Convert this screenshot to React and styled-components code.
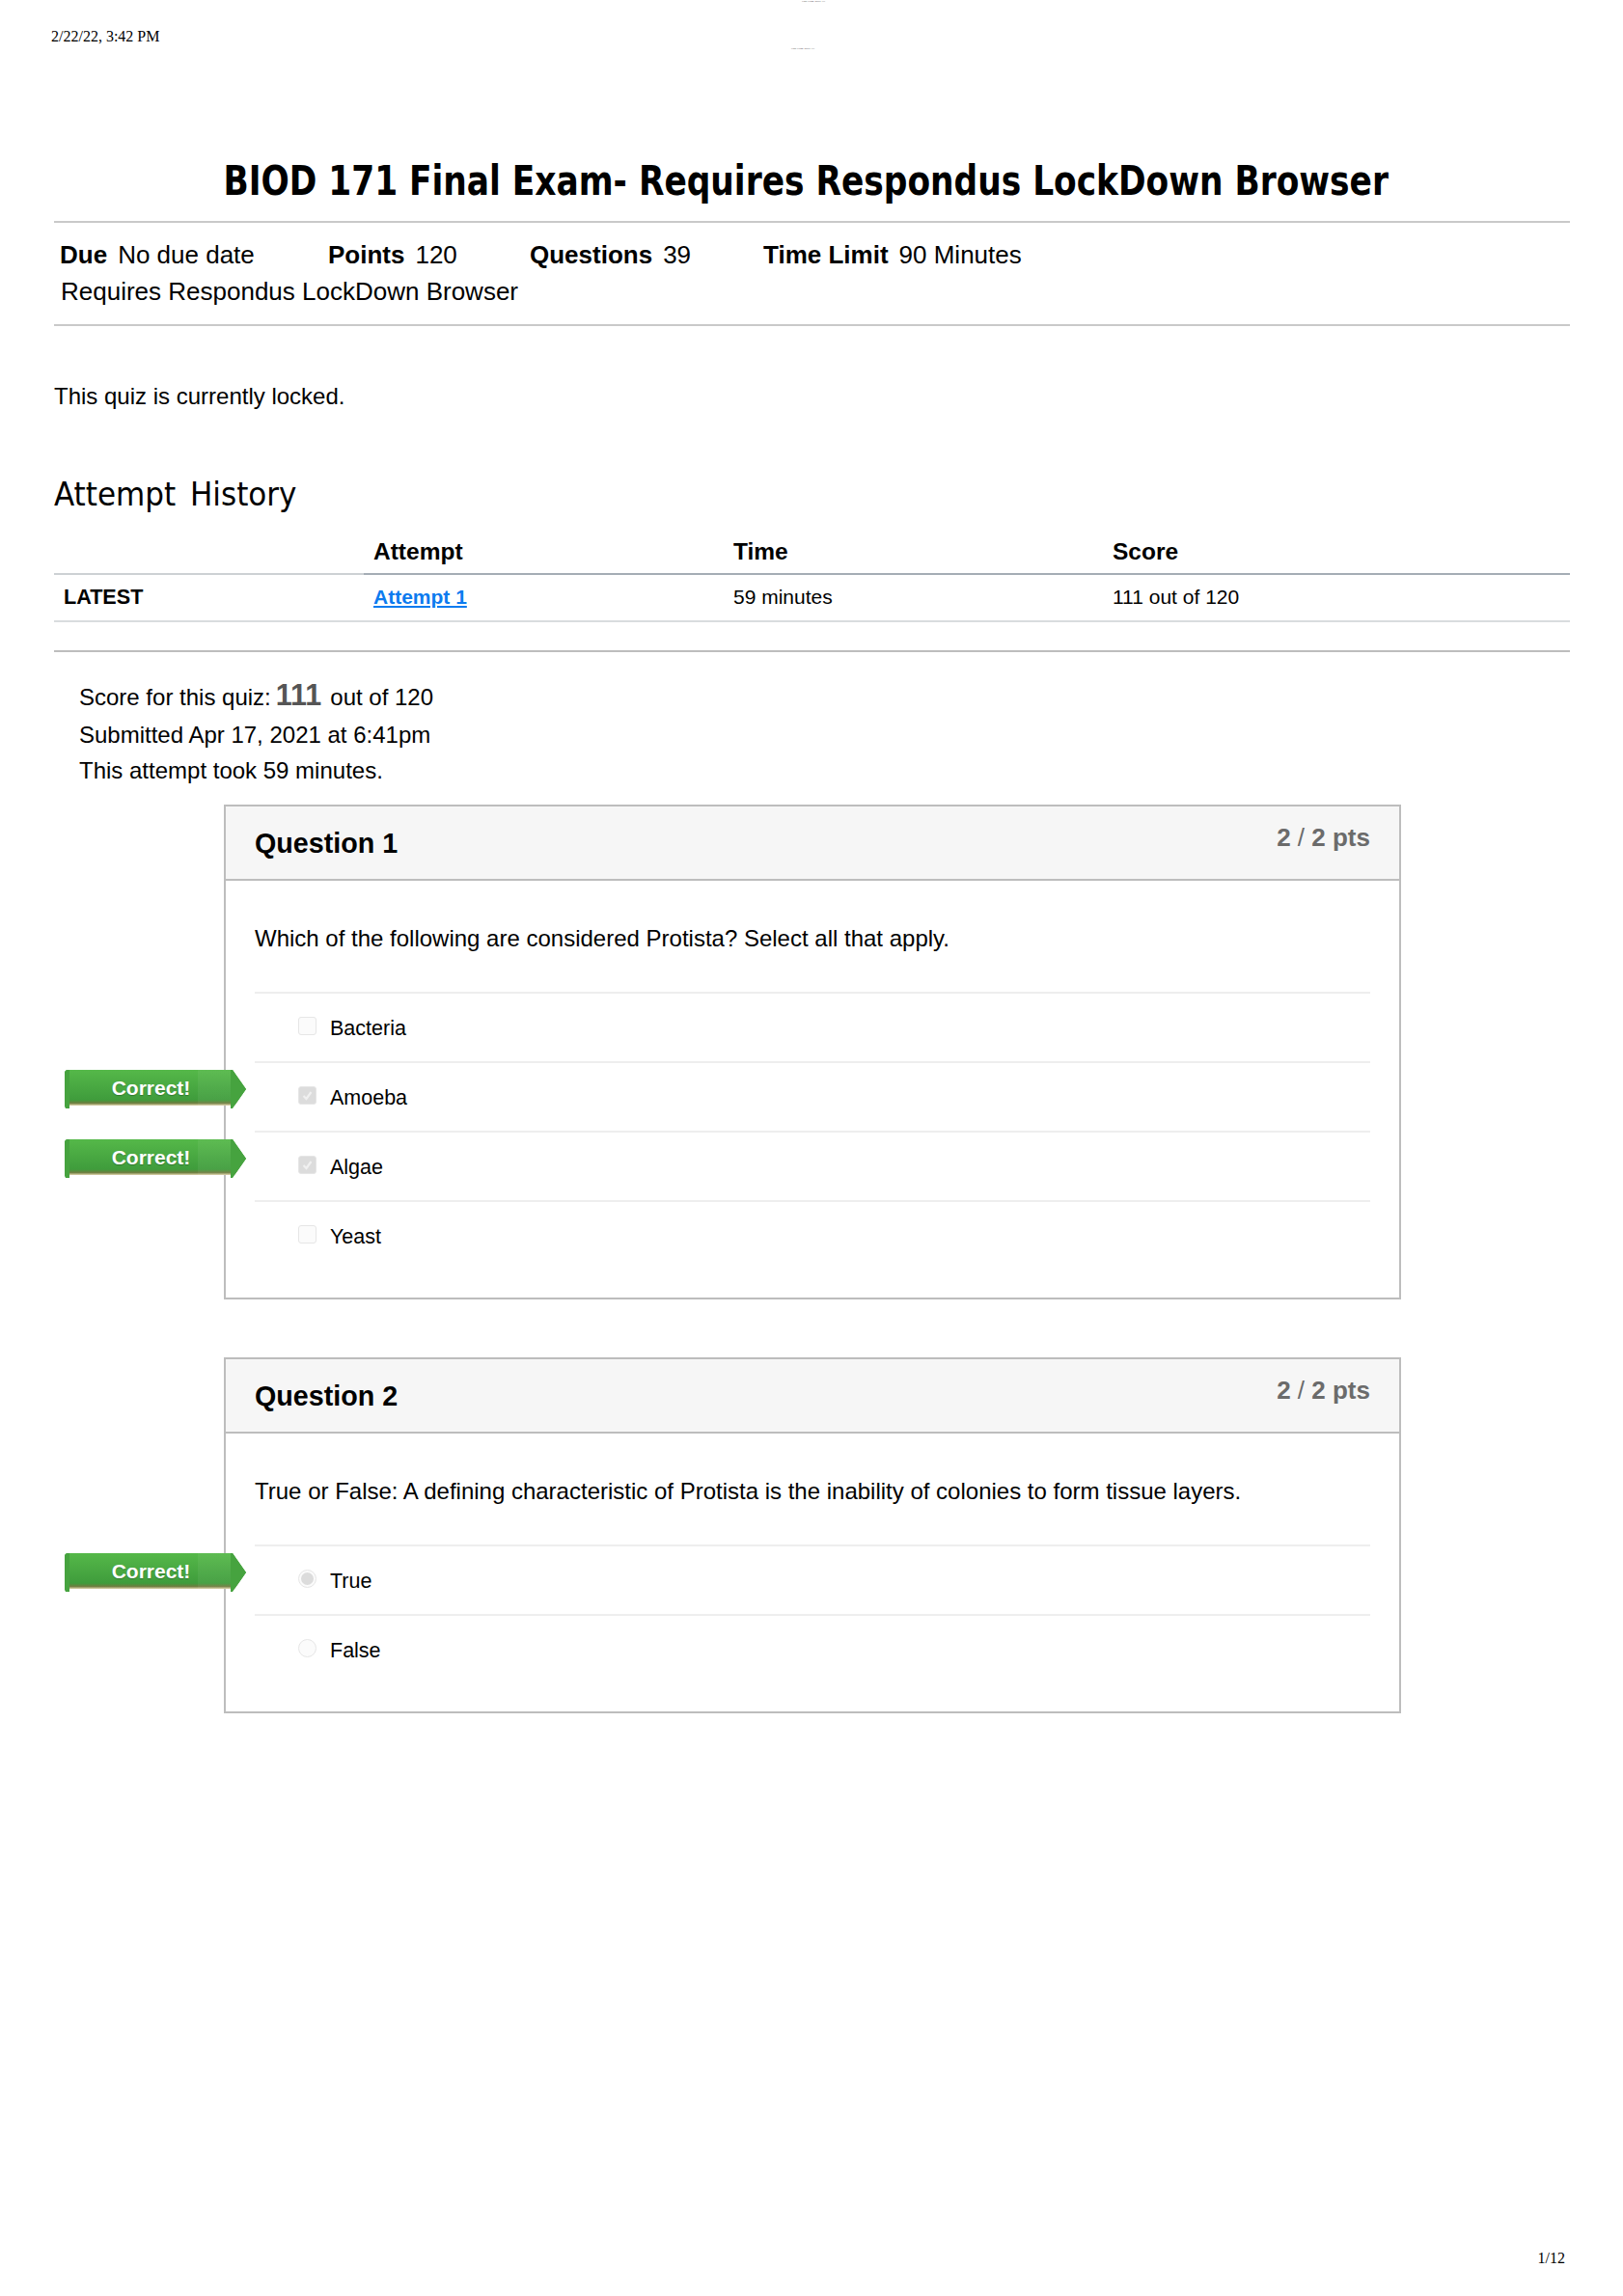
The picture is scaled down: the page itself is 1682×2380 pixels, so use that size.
import React from 'react';
import styled, { createGlobalStyle } from 'styled-components';

const GlobalStyle = createGlobalStyle`
  html, body { margin: 0; padding: 0; background: #fff; }
  body { font-family: 'Liberation Sans', Arial, sans-serif; color: #000; }
`;

const Page = styled.div`
  width: 1682px;
  height: 2380px;
  box-sizing: border-box;
  display: flex;
  flex-direction: column;
  padding: 0 55px 0 56px;
  overflow: hidden;
`;

const TinyLine = styled.div`
  height: 4px;
  line-height: 4px;
  font-size: 2.6px;
  color: #444;
  font-family: 'Liberation Serif', serif;
  margin-top: ${p => p.$top || 0}px;
  padding-left: ${p => p.$left}px;
`;

const DateLine = styled.div`
  margin: 24px 0 0 -3px;
  line-height: 20px;
  font-family: 'Liberation Serif', serif;
  font-size: 16px;
`;

const Title = styled.h1`
  margin: 110px 0 0;
  line-height: 50px;
  text-align: center;
  white-space: nowrap;
  font-family: 'DejaVu Sans', sans-serif;
  font-stretch: condensed;
  font-weight: 700;
  font-size: 42.5px;
  padding-right: 14px;
  transform: scaleX(0.9);
`;

const Rule = styled.div`
  height: 2px;
  background: ${p => p.$color || '#c9c9c9'};
  margin-top: ${p => p.$top}px;
`;

const InfoRow = styled.div`
  display: flex;
  margin-top: 14px;
  padding-left: 6px;
  line-height: 38px;
  font-size: 26px;
`;

const InfoItem = styled.div`
  width: ${p => p.$w}px;
  b { margin-right: 11px; }
`;

const InfoNote = styled.div`
  padding-left: 7px;
  line-height: 38px;
  font-size: 26px;
`;

const Locked = styled.p`
  margin: 55px 0 0;
  line-height: 36px;
  font-size: 24px;
`;

const SectionTitle = styled.h2`
  margin: 58px 0 0;
  line-height: 50px;
  font-family: 'DejaVu Sans', sans-serif;
  font-stretch: condensed;
  font-weight: 400;
  font-size: 34.5px;
  word-spacing: 5px;
`;

const Table = styled.div`
  margin-top: 13px;
  display: grid;
  grid-template-columns: 321px 373px 393px 1fr;
`;

const HeadCell = styled.div`
  height: 44px;
  line-height: 44px;
  padding-left: 10px;
  font-size: 24.5px;
  font-weight: 700;
  border-bottom: 2px solid ${p => (p.$blank ? '#cdd1d4' : '#a5adb5')};
`;

const BodyCell = styled.div`
  height: 47px;
  line-height: 46px;
  padding-left: 10px;
  font-size: ${p => (p.$bold ? 21.6 : 21)}px;
  font-weight: ${p => (p.$bold ? 700 : 400)};
  border-bottom: 2px solid #d9dcde;
  a { color: #0c7bef; font-weight: 700; text-decoration: underline; }
`;

const Summary = styled.div`
  margin-top: ${p => p.$top || 0}px;
  padding-left: 26px;
  line-height: ${p => p.$lh}px;
  font-size: 24px;
  b { font-size: 30.5px; line-height: 0; font-weight: 700; color: #555; margin: 0 9px 0 5px; }
`;

const QuestionBox = styled.section`
  width: 1220px;
  margin: ${p => p.$top}px 0 0 176px;
  box-sizing: border-box;
  border: 2px solid #bdbdbd;
  padding-bottom: ${p => p.$bottom}px;
`;

const QuestionHead = styled.header`
  height: 75px;
  display: flex;
  justify-content: space-between;
  padding: 0 30px;
  background: #f6f6f6;
  border-bottom: 2px solid #bdbdbd;
`;

const QuestionName = styled.div`
  padding-top: 21px;
  line-height: 34px;
  font-size: 28.7px;
  font-weight: 700;
`;

const QuestionPts = styled.div`
  padding-top: 17px;
  line-height: 30px;
  font-size: 26px;
  font-weight: 700;
  color: #6b6b6b;
  span { font-weight: 400; }
`;

const QuestionText = styled.p`
  margin: 0;
  padding: 42px 30px 0;
  height: 73px;
  line-height: 36px;
  font-size: 24px;
`;

const Answers = styled.div`
  margin: 0 30px;
`;

const AnswerRow = styled.div`
  position: relative;
  height: 70px;
  border-top: 2px solid #eeeeee;
  display: flex;
  align-items: center;
  padding-left: 45px;
  font-size: 21.5px;
`;

const AnswerLabel = styled.span`
  margin-top: 2px;
`;

const Check = styled.span`
  width: 19px;
  height: 19px;
  box-sizing: border-box;
  margin: -4px 14px 0 0;
  border: 1px solid #e6e6e6;
  border-radius: ${p => (p.$round ? '50%' : '3px')};
  background: ${p => (p.$checked && !p.$round ? '#dcdcdc' : '#fbfbfb')};
  display: flex;
  align-items: center;
  justify-content: center;
`;

const RadioDot = styled.span`
  width: 13px;
  height: 13px;
  border-radius: 50%;
  background: #dcdcdc;
`;

const Badge = styled.div`
  position: absolute;
  left: -197px;
  top: 7px;
  width: 188px;
  height: 40px;
  box-sizing: border-box;
  padding-right: 9px;
  text-align: center;
  line-height: 38px;
  font-size: 21px;
  font-weight: 700;
  color: #fff;
  text-shadow: 0 1px 1px rgba(0, 0, 0, 0.25);
  background:
    linear-gradient(to right, #46a33f 0 5px, transparent 5px 172px, #46a33f 172px),
    linear-gradient(to right, transparent 138px, rgba(255, 255, 255, 0.05) 138px 172px, transparent 172px),
    linear-gradient(#55b849 0%, #3f9c3c 78%, #6d7d3f 86%, #d8cfa6 92%, #fff 93%);
  clip-path: polygon(0 2px, 2px 0, 174px 0, 188px 20px, 174px 40px, 172px 40px, 172px 37px, 5px 37px, 5px 40px, 1px 40px, 0 38px);
`;

const PageNumber = styled.div`
  margin-top: auto;
  margin-bottom: 29px;
  padding-right: 5px;
  text-align: right;
  line-height: 20px;
  font-family: 'Liberation Serif', serif;
  font-size: 16px;
`;

function CheckMark() {
  return (
    <svg width="13" height="13" viewBox="0 0 13 13">
      <path d="M2.5 7l3 3 5-7" fill="none" stroke="#f0f0f0" strokeWidth="2.2" />
    </svg>
  );
}

function Answer({ label, checked, round, correct }) {
  return (
    <AnswerRow>
      {correct && <Badge>Correct!</Badge>}
      <Check $checked={checked} $round={round}>
        {checked && (round ? <RadioDot /> : <CheckMark />)}
      </Check>
      <AnswerLabel>{label}</AnswerLabel>
    </AnswerRow>
  );
}

function Question({ name, text, top, bottom, children }) {
  return (
    <QuestionBox $top={top} $bottom={bottom}>
      <QuestionHead>
        <QuestionName>{name}</QuestionName>
        <QuestionPts>2 <span>/</span> 2 pts</QuestionPts>
      </QuestionHead>
      <QuestionText>{text}</QuestionText>
      <Answers>{children}</Answers>
    </QuestionBox>
  );
}

export default function App() {
  return (
    <Page>
      <GlobalStyle />
      <TinyLine $left={775}>Final Exam: BIOD 171</TinyLine>
      <DateLine>2/22/22, 3:42 PM</DateLine>
      <TinyLine $left={764} $top={1}>Final Exam: BIOD 171</TinyLine>
      <Title>BIOD 171 Final Exam- Requires Respondus LockDown Browser</Title>
      <Rule $top={16} />
      <InfoRow>
        <InfoItem $w={278}><b>Due</b>No due date</InfoItem>
        <InfoItem $w={209}><b>Points</b>120</InfoItem>
        <InfoItem $w={242}><b>Questions</b>39</InfoItem>
        <InfoItem><b>Time Limit</b>90 Minutes</InfoItem>
      </InfoRow>
      <InfoNote>Requires Respondus LockDown Browser</InfoNote>
      <Rule $top={15} />
      <Locked>This quiz is currently locked.</Locked>
      <SectionTitle>Attempt History</SectionTitle>
      <Table>
        <HeadCell $blank />
        <HeadCell>Attempt</HeadCell>
        <HeadCell>Time</HeadCell>
        <HeadCell>Score</HeadCell>
        <BodyCell $bold>LATEST</BodyCell>
        <BodyCell><a href="#attempt">Attempt 1</a></BodyCell>
        <BodyCell>59 minutes</BodyCell>
        <BodyCell>111 out of 120</BodyCell>
      </Table>
      <Rule $top={29} $color="#bdbdbd" />
      <Summary $top={27} $lh={40}>Score for this quiz:<b>111</b>out of 120</Summary>
      <Summary $lh={38}>Submitted Apr 17, 2021 at 6:41pm</Summary>
      <Summary $lh={36}>This attempt took 59 minutes.</Summary>
      <Question
        name="Question 1"
        text="Which of the following are considered Protista? Select all that apply."
        top={17}
        bottom={29}
      >
        <Answer label="Bacteria" />
        <Answer label="Amoeba" checked correct />
        <Answer label="Algae" checked correct />
        <Answer label="Yeast" />
      </Question>
      <Question
        name="Question 2"
        text="True or False: A defining characteristic of Protista is the inability of colonies to form tissue layers."
        top={60}
        bottom={29}
      >
        <Answer label="True" round checked correct />
        <Answer label="False" round />
      </Question>
      <PageNumber>1/12</PageNumber>
    </Page>
  );
}
